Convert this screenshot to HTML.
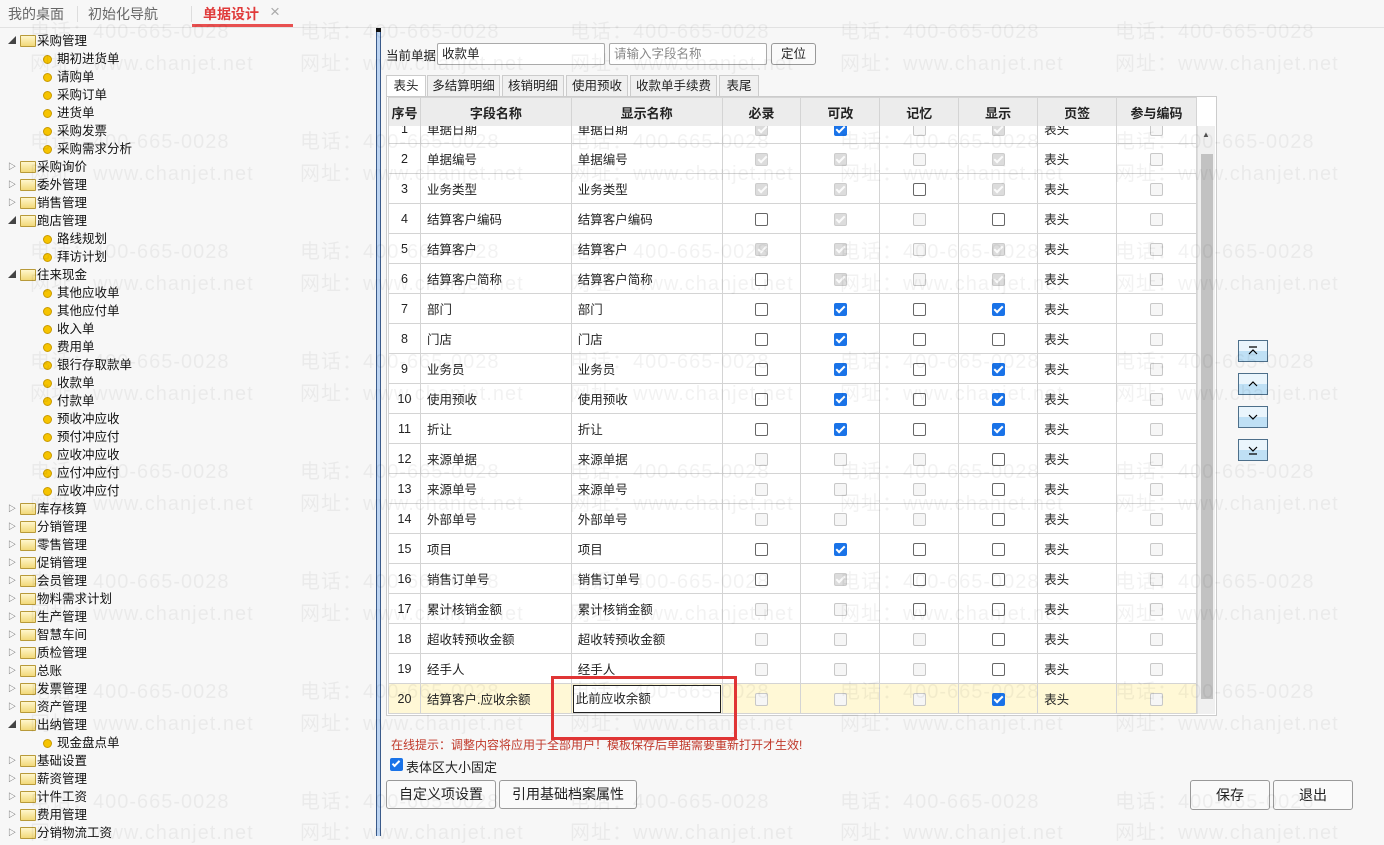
<!DOCTYPE html>
<html><head><meta charset="utf-8">
<style>
*{box-sizing:border-box;margin:0;padding:0}
body{width:1384px;height:836px;overflow:hidden;background:#f7f7f7;font-family:"Liberation Sans","Noto Sans CJK SC",sans-serif;font-size:13px;color:#222;position:relative}
.wm{position:absolute;color:rgba(0,0,0,0.05);font-size:20px;white-space:nowrap;letter-spacing:1px;z-index:5;pointer-events:none}
.tabs{position:absolute;left:0;top:0;width:1384px;height:28px;border-bottom:1px solid #e2e2e2;background:#f7f7f7}
.tabs span{position:absolute;top:4px;font-size:14px;color:#666}
.tree{position:absolute;left:0;top:32px;width:370px}
.n{position:absolute;height:18px;line-height:18px;font-size:12.5px;white-space:nowrap;color:#111}
.arr{position:absolute;left:8px;font-size:8px;color:#444}
.fold{position:absolute;left:20px;top:3px;width:16px;height:12px;border:1px solid #b89a3a;background:linear-gradient(#fff6cc,#f2d879);border-radius:1px}
.dot{position:absolute;left:43px;top:5px;width:9px;height:9px;border-radius:50%;background:#f6c400;border:1px solid #c99a00}
.vbar{position:absolute;left:376px;top:28px;width:5px;height:808px;background:#bcd4f2;border-left:1px solid #3a5a8a;border-right:1px solid #3a5a8a}
.vbar:before{content:"";position:absolute;left:-1px;top:0;width:5px;height:4px;background:#111}
.inp{position:absolute;height:22px;border:1px solid #aaa;background:#fff;font-size:12.5px;line-height:20px;padding-left:4px;border-radius:2px}
.btn{position:absolute;border:1px solid #999;background:#fafafa;border-radius:3px;text-align:center;font-size:14px}
.st{position:absolute;top:75px;height:22px;border:1px solid #ccc;border-bottom:none;background:#f0f0f0;font-size:12.5px;line-height:20px;text-align:center}
table{position:absolute;left:388px;top:97px;border-collapse:collapse;table-layout:fixed;background:#fff}
td,th{border:1px solid #d4d4d4;height:30px;font-size:12.5px;padding:0}
th{background:#ececec;font-weight:bold;height:29px;font-size:13px}
td.c{text-align:center}
td.l{padding-left:6px}
.cb{display:inline-block;width:13px;height:13px;border-radius:2px;vertical-align:middle;position:relative}
.u{border:1px solid #666;background:#fff}
.G{border:1px solid #c8c8c8;background:#f6f6f6}
.g,.k{background:#dcdcdc;border:1px solid #ccc}
.k{background:#1a73e8;border-color:#1a73e8}
.g:after,.k:after{content:"";position:absolute;left:3.5px;top:0.5px;width:3px;height:7px;border:solid #fff;border-width:0 2px 2px 0;transform:rotate(45deg)}
.g:after{border-color:#fafafa}
tr.y td{background:#fff8d6}
.sb{position:absolute;left:1197px;top:126px;width:18px;height:588px;background:#f0f0f0;border-left:1px solid #ddd}
.sbt{position:absolute;left:3px;top:28px;width:12px;height:545px;background:#c2c2c2}
.mv{position:absolute;left:1238px;width:30px;height:22px;border:1px solid #4d6f8a;background:linear-gradient(#eaf5fc 50%,#bfe0f5 50%)}
.mv svg{position:absolute;left:8px;top:5px}
</style></head><body>
<div class="tabs">
<span style="left:8px">我的桌面</span><span style="left:88px">初始化导航</span>
<div style="position:absolute;left:77px;top:6px;width:1px;height:16px;background:#ddd"></div>
<div style="position:absolute;left:191px;top:6px;width:1px;height:16px;background:#ddd"></div>
<span style="left:203px;color:#e03a3a;font-weight:bold">单据设计</span><span style="left:270px;color:#aaa;top:2px;font-size:17px">×</span>
<div style="position:absolute;left:192px;top:24px;width:101px;height:3px;background:#e85050"></div>
</div>
<div class="tree">
<div class="n" style="top:0;left:0;width:200px"><span class="arr">◢</span><span class="fold"></span><span style="position:absolute;left:37px">采购管理</span></div>
<div class="n" style="top:18px;width:200px"><span class="dot"></span><span style="position:absolute;left:57px">期初进货单</span></div>
<div class="n" style="top:36px;width:200px"><span class="dot"></span><span style="position:absolute;left:57px">请购单</span></div>
<div class="n" style="top:54px;width:200px"><span class="dot"></span><span style="position:absolute;left:57px">采购订单</span></div>
<div class="n" style="top:72px;width:200px"><span class="dot"></span><span style="position:absolute;left:57px">进货单</span></div>
<div class="n" style="top:90px;width:200px"><span class="dot"></span><span style="position:absolute;left:57px">采购发票</span></div>
<div class="n" style="top:108px;width:200px"><span class="dot"></span><span style="position:absolute;left:57px">采购需求分析</span></div>
<div class="n" style="top:126px;width:200px"><span class="arr">▷</span><span class="fold"></span><span style="position:absolute;left:37px">采购询价</span></div>
<div class="n" style="top:144px;width:200px"><span class="arr">▷</span><span class="fold"></span><span style="position:absolute;left:37px">委外管理</span></div>
<div class="n" style="top:162px;width:200px"><span class="arr">▷</span><span class="fold"></span><span style="position:absolute;left:37px">销售管理</span></div>
<div class="n" style="top:180px;width:200px"><span class="arr">◢</span><span class="fold"></span><span style="position:absolute;left:37px">跑店管理</span></div>
<div class="n" style="top:198px;width:200px"><span class="dot"></span><span style="position:absolute;left:57px">路线规划</span></div>
<div class="n" style="top:216px;width:200px"><span class="dot"></span><span style="position:absolute;left:57px">拜访计划</span></div>
<div class="n" style="top:234px;width:200px"><span class="arr">◢</span><span class="fold"></span><span style="position:absolute;left:37px">往来现金</span></div>
<div class="n" style="top:252px;width:200px"><span class="dot"></span><span style="position:absolute;left:57px">其他应收单</span></div>
<div class="n" style="top:270px;width:200px"><span class="dot"></span><span style="position:absolute;left:57px">其他应付单</span></div>
<div class="n" style="top:288px;width:200px"><span class="dot"></span><span style="position:absolute;left:57px">收入单</span></div>
<div class="n" style="top:306px;width:200px"><span class="dot"></span><span style="position:absolute;left:57px">费用单</span></div>
<div class="n" style="top:324px;width:200px"><span class="dot"></span><span style="position:absolute;left:57px">银行存取款单</span></div>
<div class="n" style="top:342px;width:200px"><span class="dot"></span><span style="position:absolute;left:57px">收款单</span></div>
<div class="n" style="top:360px;width:200px"><span class="dot"></span><span style="position:absolute;left:57px">付款单</span></div>
<div class="n" style="top:378px;width:200px"><span class="dot"></span><span style="position:absolute;left:57px">预收冲应收</span></div>
<div class="n" style="top:396px;width:200px"><span class="dot"></span><span style="position:absolute;left:57px">预付冲应付</span></div>
<div class="n" style="top:414px;width:200px"><span class="dot"></span><span style="position:absolute;left:57px">应收冲应收</span></div>
<div class="n" style="top:432px;width:200px"><span class="dot"></span><span style="position:absolute;left:57px">应付冲应付</span></div>
<div class="n" style="top:450px;width:200px"><span class="dot"></span><span style="position:absolute;left:57px">应收冲应付</span></div>
<div class="n" style="top:468px;width:200px"><span class="arr">▷</span><span class="fold"></span><span style="position:absolute;left:37px">库存核算</span></div>
<div class="n" style="top:486px;width:200px"><span class="arr">▷</span><span class="fold"></span><span style="position:absolute;left:37px">分销管理</span></div>
<div class="n" style="top:504px;width:200px"><span class="arr">▷</span><span class="fold"></span><span style="position:absolute;left:37px">零售管理</span></div>
<div class="n" style="top:522px;width:200px"><span class="arr">▷</span><span class="fold"></span><span style="position:absolute;left:37px">促销管理</span></div>
<div class="n" style="top:540px;width:200px"><span class="arr">▷</span><span class="fold"></span><span style="position:absolute;left:37px">会员管理</span></div>
<div class="n" style="top:558px;width:200px"><span class="arr">▷</span><span class="fold"></span><span style="position:absolute;left:37px">物料需求计划</span></div>
<div class="n" style="top:576px;width:200px"><span class="arr">▷</span><span class="fold"></span><span style="position:absolute;left:37px">生产管理</span></div>
<div class="n" style="top:594px;width:200px"><span class="arr">▷</span><span class="fold"></span><span style="position:absolute;left:37px">智慧车间</span></div>
<div class="n" style="top:612px;width:200px"><span class="arr">▷</span><span class="fold"></span><span style="position:absolute;left:37px">质检管理</span></div>
<div class="n" style="top:630px;width:200px"><span class="arr">▷</span><span class="fold"></span><span style="position:absolute;left:37px">总账</span></div>
<div class="n" style="top:648px;width:200px"><span class="arr">▷</span><span class="fold"></span><span style="position:absolute;left:37px">发票管理</span></div>
<div class="n" style="top:666px;width:200px"><span class="arr">▷</span><span class="fold"></span><span style="position:absolute;left:37px">资产管理</span></div>
<div class="n" style="top:684px;width:200px"><span class="arr">◢</span><span class="fold"></span><span style="position:absolute;left:37px">出纳管理</span></div>
<div class="n" style="top:702px;width:200px"><span class="dot"></span><span style="position:absolute;left:57px">现金盘点单</span></div>
<div class="n" style="top:720px;width:200px"><span class="arr">▷</span><span class="fold"></span><span style="position:absolute;left:37px">基础设置</span></div>
<div class="n" style="top:738px;width:200px"><span class="arr">▷</span><span class="fold"></span><span style="position:absolute;left:37px">薪资管理</span></div>
<div class="n" style="top:756px;width:200px"><span class="arr">▷</span><span class="fold"></span><span style="position:absolute;left:37px">计件工资</span></div>
<div class="n" style="top:774px;width:200px"><span class="arr">▷</span><span class="fold"></span><span style="position:absolute;left:37px">费用管理</span></div>
<div class="n" style="top:792px;width:200px"><span class="arr">▷</span><span class="fold"></span><span style="position:absolute;left:37px">分销物流工资</span></div>
</div>
<div class="vbar"></div>

<div style="position:absolute;left:386px;top:45px;font-size:12.5px">当前单据</div>
<div class="inp" style="left:437px;top:43px;width:168px">收款单</div>
<div class="inp" style="left:609px;top:43px;width:158px;color:#888">请输入字段名称</div>
<div class="btn" style="left:771px;top:43px;width:45px;height:22px;font-size:12.5px;line-height:20px">定位</div>

<div class="st" style="left:386px;width:40px;background:#fff;height:23px">表头</div>
<div class="st" style="left:427px;width:73px">多结算明细</div>
<div class="st" style="left:502px;width:62px">核销明细</div>
<div class="st" style="left:566px;width:62px">使用预收</div>
<div class="st" style="left:630px;width:87px">收款单手续费</div>
<div class="st" style="left:719px;width:40px">表尾</div>
<div style="position:absolute;left:386px;top:96px;width:831px;height:620px;border:1px solid #ccc;background:#fff"></div>

<div style="position:absolute;left:388px;top:97px;width:809px;height:617px;overflow:hidden">
<table style="left:0;top:0">
<colgroup><col style="width:32px"><col style="width:151px"><col style="width:151px"><col style="width:79px"><col style="width:79px"><col style="width:79px"><col style="width:79px"><col style="width:79px"><col style="width:80px"></colgroup>
<tr><th>序号</th><th>字段名称</th><th>显示名称</th><th>必录</th><th>可改</th><th>记忆</th><th>显示</th><th>页签</th><th>参与编码</th></tr>
</table>
<div style="position:absolute;left:0;top:29px;width:809px;height:588px;overflow:hidden">
<table style="left:0;top:-13px">
<colgroup><col style="width:32px"><col style="width:151px"><col style="width:151px"><col style="width:79px"><col style="width:79px"><col style="width:79px"><col style="width:79px"><col style="width:79px"><col style="width:80px"></colgroup>
<tr><td class="c">1</td><td class="l">单据日期</td><td class="l">单据日期</td><td class="c"><i class="cb g"></i></td><td class="c"><i class="cb k"></i></td><td class="c"><i class="cb G"></i></td><td class="c"><i class="cb g"></i></td><td class="l">表头</td><td class="c"><i class="cb G"></i></td></tr>
<tr><td class="c">2</td><td class="l">单据编号</td><td class="l">单据编号</td><td class="c"><i class="cb g"></i></td><td class="c"><i class="cb g"></i></td><td class="c"><i class="cb G"></i></td><td class="c"><i class="cb g"></i></td><td class="l">表头</td><td class="c"><i class="cb G"></i></td></tr>
<tr><td class="c">3</td><td class="l">业务类型</td><td class="l">业务类型</td><td class="c"><i class="cb g"></i></td><td class="c"><i class="cb g"></i></td><td class="c"><i class="cb u"></i></td><td class="c"><i class="cb g"></i></td><td class="l">表头</td><td class="c"><i class="cb G"></i></td></tr>
<tr><td class="c">4</td><td class="l">结算客户编码</td><td class="l">结算客户编码</td><td class="c"><i class="cb u"></i></td><td class="c"><i class="cb g"></i></td><td class="c"><i class="cb G"></i></td><td class="c"><i class="cb u"></i></td><td class="l">表头</td><td class="c"><i class="cb G"></i></td></tr>
<tr><td class="c">5</td><td class="l">结算客户</td><td class="l">结算客户</td><td class="c"><i class="cb g"></i></td><td class="c"><i class="cb g"></i></td><td class="c"><i class="cb G"></i></td><td class="c"><i class="cb g"></i></td><td class="l">表头</td><td class="c"><i class="cb G"></i></td></tr>
<tr><td class="c">6</td><td class="l">结算客户简称</td><td class="l">结算客户简称</td><td class="c"><i class="cb u"></i></td><td class="c"><i class="cb g"></i></td><td class="c"><i class="cb G"></i></td><td class="c"><i class="cb g"></i></td><td class="l">表头</td><td class="c"><i class="cb G"></i></td></tr>
<tr><td class="c">7</td><td class="l">部门</td><td class="l">部门</td><td class="c"><i class="cb u"></i></td><td class="c"><i class="cb k"></i></td><td class="c"><i class="cb u"></i></td><td class="c"><i class="cb k"></i></td><td class="l">表头</td><td class="c"><i class="cb G"></i></td></tr>
<tr><td class="c">8</td><td class="l">门店</td><td class="l">门店</td><td class="c"><i class="cb u"></i></td><td class="c"><i class="cb k"></i></td><td class="c"><i class="cb u"></i></td><td class="c"><i class="cb u"></i></td><td class="l">表头</td><td class="c"><i class="cb G"></i></td></tr>
<tr><td class="c">9</td><td class="l">业务员</td><td class="l">业务员</td><td class="c"><i class="cb u"></i></td><td class="c"><i class="cb k"></i></td><td class="c"><i class="cb u"></i></td><td class="c"><i class="cb k"></i></td><td class="l">表头</td><td class="c"><i class="cb G"></i></td></tr>
<tr><td class="c">10</td><td class="l">使用预收</td><td class="l">使用预收</td><td class="c"><i class="cb u"></i></td><td class="c"><i class="cb k"></i></td><td class="c"><i class="cb u"></i></td><td class="c"><i class="cb k"></i></td><td class="l">表头</td><td class="c"><i class="cb G"></i></td></tr>
<tr><td class="c">11</td><td class="l">折让</td><td class="l">折让</td><td class="c"><i class="cb u"></i></td><td class="c"><i class="cb k"></i></td><td class="c"><i class="cb u"></i></td><td class="c"><i class="cb k"></i></td><td class="l">表头</td><td class="c"><i class="cb G"></i></td></tr>
<tr><td class="c">12</td><td class="l">来源单据</td><td class="l">来源单据</td><td class="c"><i class="cb G"></i></td><td class="c"><i class="cb G"></i></td><td class="c"><i class="cb G"></i></td><td class="c"><i class="cb u"></i></td><td class="l">表头</td><td class="c"><i class="cb G"></i></td></tr>
<tr><td class="c">13</td><td class="l">来源单号</td><td class="l">来源单号</td><td class="c"><i class="cb G"></i></td><td class="c"><i class="cb G"></i></td><td class="c"><i class="cb G"></i></td><td class="c"><i class="cb u"></i></td><td class="l">表头</td><td class="c"><i class="cb G"></i></td></tr>
<tr><td class="c">14</td><td class="l">外部单号</td><td class="l">外部单号</td><td class="c"><i class="cb G"></i></td><td class="c"><i class="cb G"></i></td><td class="c"><i class="cb G"></i></td><td class="c"><i class="cb u"></i></td><td class="l">表头</td><td class="c"><i class="cb G"></i></td></tr>
<tr><td class="c">15</td><td class="l">项目</td><td class="l">项目</td><td class="c"><i class="cb u"></i></td><td class="c"><i class="cb k"></i></td><td class="c"><i class="cb u"></i></td><td class="c"><i class="cb u"></i></td><td class="l">表头</td><td class="c"><i class="cb G"></i></td></tr>
<tr><td class="c">16</td><td class="l">销售订单号</td><td class="l">销售订单号</td><td class="c"><i class="cb u"></i></td><td class="c"><i class="cb g"></i></td><td class="c"><i class="cb u"></i></td><td class="c"><i class="cb u"></i></td><td class="l">表头</td><td class="c"><i class="cb G"></i></td></tr>
<tr><td class="c">17</td><td class="l">累计核销金额</td><td class="l">累计核销金额</td><td class="c"><i class="cb G"></i></td><td class="c"><i class="cb G"></i></td><td class="c"><i class="cb u"></i></td><td class="c"><i class="cb u"></i></td><td class="l">表头</td><td class="c"><i class="cb G"></i></td></tr>
<tr><td class="c">18</td><td class="l">超收转预收金额</td><td class="l">超收转预收金额</td><td class="c"><i class="cb G"></i></td><td class="c"><i class="cb G"></i></td><td class="c"><i class="cb G"></i></td><td class="c"><i class="cb u"></i></td><td class="l">表头</td><td class="c"><i class="cb G"></i></td></tr>
<tr><td class="c">19</td><td class="l">经手人</td><td class="l">经手人</td><td class="c"><i class="cb G"></i></td><td class="c"><i class="cb G"></i></td><td class="c"><i class="cb G"></i></td><td class="c"><i class="cb u"></i></td><td class="l">表头</td><td class="c"><i class="cb G"></i></td></tr>
<tr class="y"><td class="c">20</td><td class="l">结算客户.应收余额</td><td style="padding:0 1px"><div style="border:1px solid #222;height:28px;background:#fff;line-height:26px;padding-left:2px">此前应收余额</div></td><td class="c"><i class="cb G"></i></td><td class="c"><i class="cb G"></i></td><td class="c"><i class="cb G"></i></td><td class="c"><i class="cb k"></i></td><td class="l">表头</td><td class="c"><i class="cb G"></i></td></tr>
</table></div></div>
<div class="sb"><div style="position:absolute;left:4px;top:4px;font-size:8px;color:#555">▲</div><div class="sbt"></div></div>
<div style="position:absolute;left:551px;top:676px;width:186px;height:64px;border:3px solid #e03535;z-index:6"></div>

<div class="mv" style="top:340px"><svg width="12" height="10"><path d="M2 1H10M2 8L6 4L10 8" stroke="#000" fill="none" stroke-width="1.2"/></svg></div>
<div class="mv" style="top:373px"><svg width="12" height="10"><path d="M2 7L6 3L10 7" stroke="#000" fill="none" stroke-width="1.2"/></svg></div>
<div class="mv" style="top:406px"><svg width="12" height="10"><path d="M2 3L6 7L10 3" stroke="#000" fill="none" stroke-width="1.2"/></svg></div>
<div class="mv" style="top:439px"><svg width="12" height="10"><path d="M2 2L6 6L10 2M2 9H10" stroke="#000" fill="none" stroke-width="1.2"/></svg></div>

<div style="position:absolute;left:391px;top:736px;font-size:12px;color:#c0392b">在线提示：调整内容将应用于全部用户！模板保存后单据需要重新打开才生效!</div>
<div style="position:absolute;left:390px;top:758px;width:13px;height:13px;background:#1a73e8;border-radius:2px"><div style="position:absolute;left:4px;top:1px;width:4px;height:8px;border:solid #fff;border-width:0 2px 2px 0;transform:rotate(45deg)"></div></div>
<div style="position:absolute;left:406px;top:757px;font-size:13px">表体区大小固定</div>
<div class="btn" style="left:386px;top:780px;width:110px;height:29px;line-height:27px">自定义项设置</div>
<div class="btn" style="left:499px;top:780px;width:138px;height:29px;line-height:27px">引用基础档案属性</div>
<div class="btn" style="left:1190px;top:780px;width:80px;height:30px;line-height:28px">保存</div>
<div class="btn" style="left:1273px;top:780px;width:80px;height:30px;line-height:28px">退出</div>

<div class="wm" style="left:30px;top:15px">电话：400-665-0028</div><div class="wm" style="left:300px;top:15px">电话：400-665-0028</div><div class="wm" style="left:570px;top:15px">电话：400-665-0028</div><div class="wm" style="left:840px;top:15px">电话：400-665-0028</div><div class="wm" style="left:1115px;top:15px">电话：400-665-0028</div>
<div class="wm" style="left:30px;top:47px">网址：www.chanjet.net</div><div class="wm" style="left:300px;top:47px">网址：www.chanjet.net</div><div class="wm" style="left:570px;top:47px">网址：www.chanjet.net</div><div class="wm" style="left:840px;top:47px">网址：www.chanjet.net</div><div class="wm" style="left:1115px;top:47px">网址：www.chanjet.net</div>
<div class="wm" style="left:30px;top:125px">电话：400-665-0028</div><div class="wm" style="left:300px;top:125px">电话：400-665-0028</div><div class="wm" style="left:570px;top:125px">电话：400-665-0028</div><div class="wm" style="left:840px;top:125px">电话：400-665-0028</div><div class="wm" style="left:1115px;top:125px">电话：400-665-0028</div>
<div class="wm" style="left:30px;top:157px">网址：www.chanjet.net</div><div class="wm" style="left:300px;top:157px">网址：www.chanjet.net</div><div class="wm" style="left:570px;top:157px">网址：www.chanjet.net</div><div class="wm" style="left:840px;top:157px">网址：www.chanjet.net</div><div class="wm" style="left:1115px;top:157px">网址：www.chanjet.net</div>
<div class="wm" style="left:30px;top:235px">电话：400-665-0028</div><div class="wm" style="left:300px;top:235px">电话：400-665-0028</div><div class="wm" style="left:570px;top:235px">电话：400-665-0028</div><div class="wm" style="left:840px;top:235px">电话：400-665-0028</div><div class="wm" style="left:1115px;top:235px">电话：400-665-0028</div>
<div class="wm" style="left:30px;top:267px">网址：www.chanjet.net</div><div class="wm" style="left:300px;top:267px">网址：www.chanjet.net</div><div class="wm" style="left:570px;top:267px">网址：www.chanjet.net</div><div class="wm" style="left:840px;top:267px">网址：www.chanjet.net</div><div class="wm" style="left:1115px;top:267px">网址：www.chanjet.net</div>
<div class="wm" style="left:30px;top:345px">电话：400-665-0028</div><div class="wm" style="left:300px;top:345px">电话：400-665-0028</div><div class="wm" style="left:570px;top:345px">电话：400-665-0028</div><div class="wm" style="left:840px;top:345px">电话：400-665-0028</div><div class="wm" style="left:1115px;top:345px">电话：400-665-0028</div>
<div class="wm" style="left:30px;top:377px">网址：www.chanjet.net</div><div class="wm" style="left:300px;top:377px">网址：www.chanjet.net</div><div class="wm" style="left:570px;top:377px">网址：www.chanjet.net</div><div class="wm" style="left:840px;top:377px">网址：www.chanjet.net</div><div class="wm" style="left:1115px;top:377px">网址：www.chanjet.net</div>
<div class="wm" style="left:30px;top:455px">电话：400-665-0028</div><div class="wm" style="left:300px;top:455px">电话：400-665-0028</div><div class="wm" style="left:570px;top:455px">电话：400-665-0028</div><div class="wm" style="left:840px;top:455px">电话：400-665-0028</div><div class="wm" style="left:1115px;top:455px">电话：400-665-0028</div>
<div class="wm" style="left:30px;top:487px">网址：www.chanjet.net</div><div class="wm" style="left:300px;top:487px">网址：www.chanjet.net</div><div class="wm" style="left:570px;top:487px">网址：www.chanjet.net</div><div class="wm" style="left:840px;top:487px">网址：www.chanjet.net</div><div class="wm" style="left:1115px;top:487px">网址：www.chanjet.net</div>
<div class="wm" style="left:30px;top:565px">电话：400-665-0028</div><div class="wm" style="left:300px;top:565px">电话：400-665-0028</div><div class="wm" style="left:570px;top:565px">电话：400-665-0028</div><div class="wm" style="left:840px;top:565px">电话：400-665-0028</div><div class="wm" style="left:1115px;top:565px">电话：400-665-0028</div>
<div class="wm" style="left:30px;top:597px">网址：www.chanjet.net</div><div class="wm" style="left:300px;top:597px">网址：www.chanjet.net</div><div class="wm" style="left:570px;top:597px">网址：www.chanjet.net</div><div class="wm" style="left:840px;top:597px">网址：www.chanjet.net</div><div class="wm" style="left:1115px;top:597px">网址：www.chanjet.net</div>
<div class="wm" style="left:30px;top:675px">电话：400-665-0028</div><div class="wm" style="left:300px;top:675px">电话：400-665-0028</div><div class="wm" style="left:570px;top:675px">电话：400-665-0028</div><div class="wm" style="left:840px;top:675px">电话：400-665-0028</div><div class="wm" style="left:1115px;top:675px">电话：400-665-0028</div>
<div class="wm" style="left:30px;top:707px">网址：www.chanjet.net</div><div class="wm" style="left:300px;top:707px">网址：www.chanjet.net</div><div class="wm" style="left:570px;top:707px">网址：www.chanjet.net</div><div class="wm" style="left:840px;top:707px">网址：www.chanjet.net</div><div class="wm" style="left:1115px;top:707px">网址：www.chanjet.net</div>
<div class="wm" style="left:30px;top:785px">电话：400-665-0028</div><div class="wm" style="left:300px;top:785px">电话：400-665-0028</div><div class="wm" style="left:570px;top:785px">电话：400-665-0028</div><div class="wm" style="left:840px;top:785px">电话：400-665-0028</div><div class="wm" style="left:1115px;top:785px">电话：400-665-0028</div>
<div class="wm" style="left:30px;top:816px">网址：www.chanjet.net</div><div class="wm" style="left:300px;top:816px">网址：www.chanjet.net</div><div class="wm" style="left:570px;top:816px">网址：www.chanjet.net</div><div class="wm" style="left:840px;top:816px">网址：www.chanjet.net</div><div class="wm" style="left:1115px;top:816px">网址：www.chanjet.net</div>
</body></html>
